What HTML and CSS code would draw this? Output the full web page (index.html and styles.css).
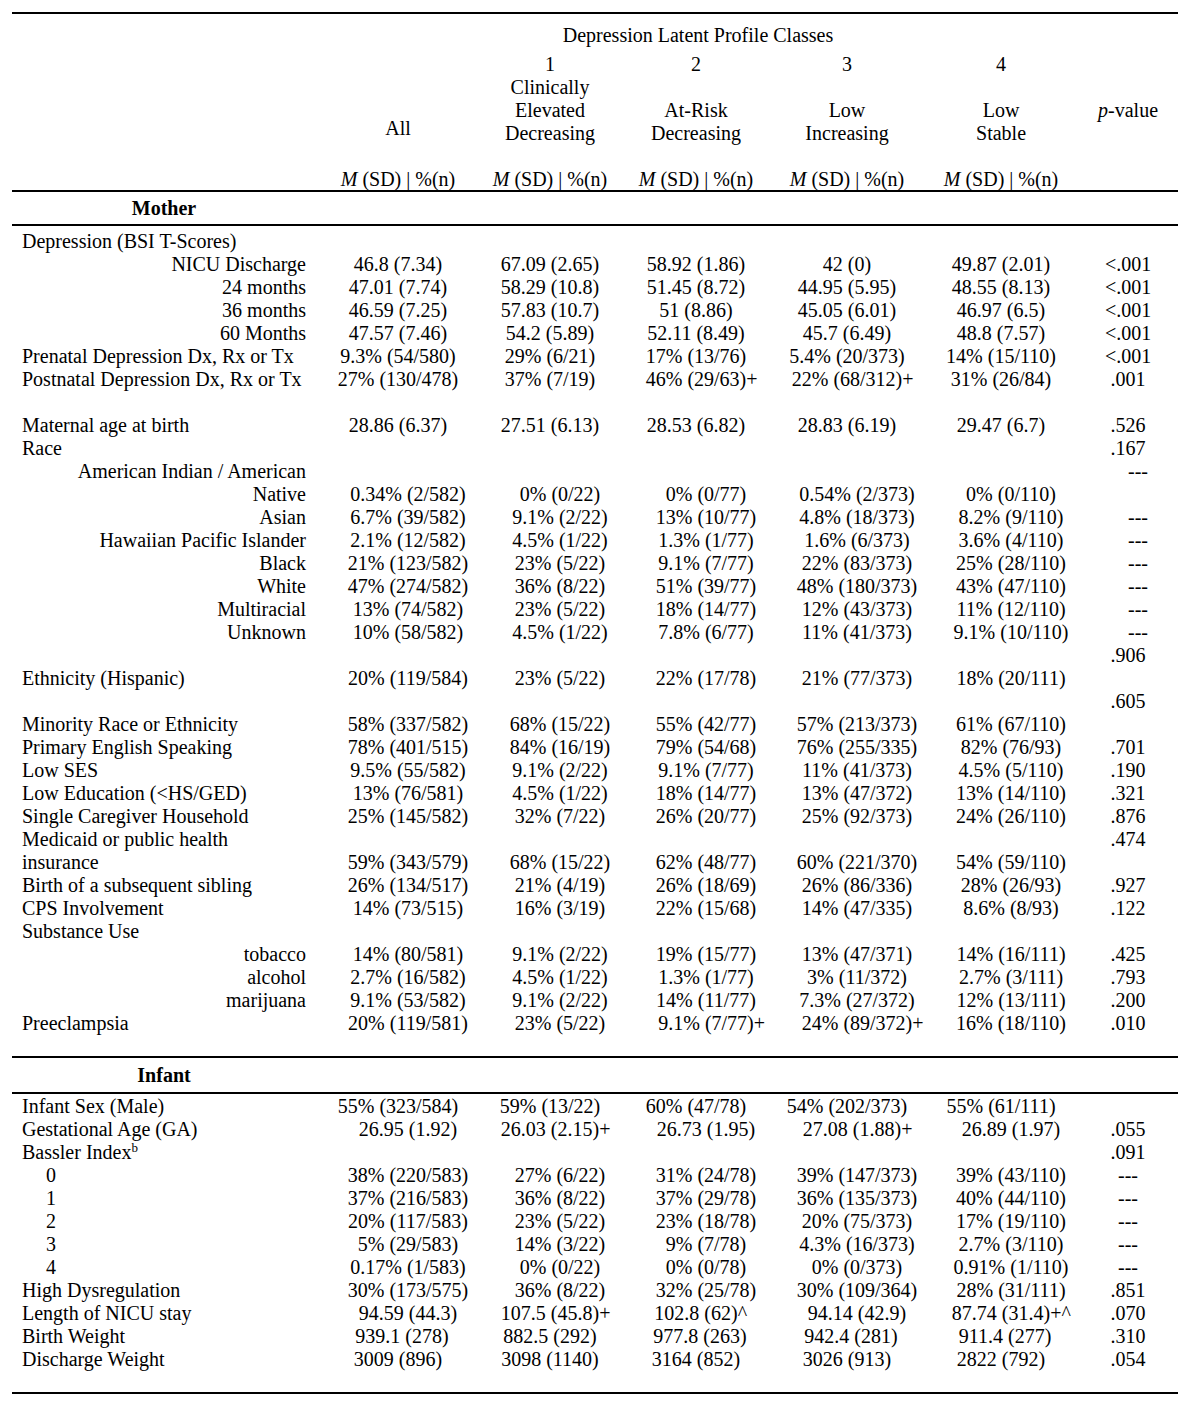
FILE: index.html
```html
<!DOCTYPE html>
<html lang="en">
<head>
<meta charset="utf-8">
<title>Depression Latent Profile Classes</title>
<link rel="stylesheet" href="styles.css">
</head>
<body>
<div class="page">
<table class="t">
<colgroup><col class="c0"><col class="c1"><col class="c2"><col class="c3"><col class="c4"><col class="c5"><col class="c6"></colgroup>
<thead>
<tr class="ttl"><td></td><td colspan="5" class="ctr">Depression Latent Profile Classes</td><td></td></tr>
<tr><td></td><td rowspan="4" class="all">All</td><td class="ctr">1</td><td class="ctr">2</td><td class="ctr">3</td><td class="ctr">4</td><td></td></tr>
<tr><td></td><td class="ctr">Clinically</td><td></td><td></td><td></td><td></td></tr>
<tr><td></td><td class="ctr">Elevated</td><td class="ctr">At-Risk</td><td class="ctr">Low</td><td class="ctr">Low</td><td class="pv"><i>p</i>-value</td></tr>
<tr><td></td><td class="ctr">Decreasing</td><td class="ctr">Decreasing</td><td class="ctr">Increasing</td><td class="ctr">Stable</td><td></td></tr>
<tr><td>&nbsp;</td><td></td><td></td><td></td><td></td><td></td><td></td></tr>
<tr class="msd"><td></td><td class="ctr"><i>M</i> (SD) | %(n)</td><td class="ctr"><i>M</i> (SD) | %(n)</td><td class="ctr"><i>M</i> (SD) | %(n)</td><td class="ctr"><i>M</i> (SD) | %(n)</td><td class="ctr"><i>M</i> (SD) | %(n)</td><td></td></tr>
</thead>
<tbody class="b">
<tr class="sec"><td class="sh">Mother</td><td></td><td></td><td></td><td></td><td></td><td></td></tr>
<tr class="first"><td>Depression (BSI T-Scores)</td><td></td><td></td><td></td><td></td><td></td><td></td></tr>
<tr><td class="r">NICU Discharge</td><td>46.8 (7.34)</td><td>67.09 (2.65)</td><td>58.92 (1.86)</td><td>42 (0)</td><td>49.87 (2.01)</td><td>&lt;.001</td></tr>
<tr><td class="r">24 months</td><td>47.01 (7.74)</td><td>58.29 (10.8)</td><td>51.45 (8.72)</td><td>44.95 (5.95)</td><td>48.55 (8.13)</td><td>&lt;.001</td></tr>
<tr><td class="r">36 months</td><td>46.59 (7.25)</td><td>57.83 (10.7)</td><td>51 (8.86)</td><td>45.05 (6.01)</td><td>46.97 (6.5)</td><td>&lt;.001</td></tr>
<tr><td class="r">60 Months</td><td>47.57 (7.46)</td><td>54.2 (5.89)</td><td>52.11 (8.49)</td><td>45.7 (6.49)</td><td>48.8 (7.57)</td><td>&lt;.001</td></tr>
<tr><td>Prenatal Depression Dx, Rx or Tx</td><td>9.3% (54/580)</td><td>29% (6/21)</td><td>17% (13/76)</td><td>5.4% (20/373)</td><td>14% (15/110)</td><td>&lt;.001</td></tr>
<tr><td>Postnatal Depression Dx, Rx or Tx</td><td>27% (130/478)</td><td>37% (7/19)</td><td>46% (29/63)<span class="x">+</span></td><td>22% (68/312)<span class="x">+</span></td><td>31% (26/84)</td><td>.001</td></tr>
<tr><td>&nbsp;</td><td></td><td></td><td></td><td></td><td></td><td></td></tr>
<tr><td>Maternal age at birth</td><td>28.86 (6.37)</td><td>27.51 (6.13)</td><td>28.53 (6.82)</td><td>28.83 (6.19)</td><td>29.47 (6.7)</td><td>.526</td></tr>
<tr><td>Race</td><td></td><td></td><td></td><td></td><td></td><td>.167</td></tr>
<tr><td class="r">American Indian / American</td><td></td><td></td><td></td><td></td><td></td><td class="ps">---</td></tr>
<tr class="s"><td class="r">Native</td><td>0.34% (2/582)</td><td>0% (0/22)</td><td>0% (0/77)</td><td>0.54% (2/373)</td><td>0% (0/110)</td><td></td></tr>
<tr class="s"><td class="r">Asian</td><td>6.7% (39/582)</td><td>9.1% (2/22)</td><td>13% (10/77)</td><td>4.8% (18/373)</td><td>8.2% (9/110)</td><td class="ps">---</td></tr>
<tr class="s"><td class="r">Hawaiian Pacific Islander</td><td>2.1% (12/582)</td><td>4.5% (1/22)</td><td>1.3% (1/77)</td><td>1.6% (6/373)</td><td>3.6% (4/110)</td><td class="ps">---</td></tr>
<tr class="s"><td class="r">Black</td><td>21% (123/582)</td><td>23% (5/22)</td><td>9.1% (7/77)</td><td>22% (83/373)</td><td>25% (28/110)</td><td class="ps">---</td></tr>
<tr class="s"><td class="r">White</td><td>47% (274/582)</td><td>36% (8/22)</td><td>51% (39/77)</td><td>48% (180/373)</td><td>43% (47/110)</td><td class="ps">---</td></tr>
<tr class="s"><td class="r">Multiracial</td><td>13% (74/582)</td><td>23% (5/22)</td><td>18% (14/77)</td><td>12% (43/373)</td><td>11% (12/110)</td><td class="ps">---</td></tr>
<tr class="s"><td class="r">Unknown</td><td>10% (58/582)</td><td>4.5% (1/22)</td><td>7.8% (6/77)</td><td>11% (41/373)</td><td>9.1% (10/110)</td><td class="ps">---</td></tr>
<tr><td>&nbsp;</td><td></td><td></td><td></td><td></td><td></td><td>.906</td></tr>
<tr class="s"><td>Ethnicity (Hispanic)</td><td>20% (119/584)</td><td>23% (5/22)</td><td>22% (17/78)</td><td>21% (77/373)</td><td>18% (20/111)</td><td></td></tr>
<tr><td>&nbsp;</td><td></td><td></td><td></td><td></td><td></td><td>.605</td></tr>
<tr class="s"><td>Minority Race or Ethnicity</td><td>58% (337/582)</td><td>68% (15/22)</td><td>55% (42/77)</td><td>57% (213/373)</td><td>61% (67/110)</td><td></td></tr>
<tr class="s"><td>Primary English Speaking</td><td>78% (401/515)</td><td>84% (16/19)</td><td>79% (54/68)</td><td>76% (255/335)</td><td>82% (76/93)</td><td>.701</td></tr>
<tr class="s"><td>Low SES</td><td>9.5% (55/582)</td><td>9.1% (2/22)</td><td>9.1% (7/77)</td><td>11% (41/373)</td><td>4.5% (5/110)</td><td>.190</td></tr>
<tr class="s"><td>Low Education (&lt;HS/GED)</td><td>13% (76/581)</td><td>4.5% (1/22)</td><td>18% (14/77)</td><td>13% (47/372)</td><td>13% (14/110)</td><td>.321</td></tr>
<tr class="s"><td>Single Caregiver Household</td><td>25% (145/582)</td><td>32% (7/22)</td><td>26% (20/77)</td><td>25% (92/373)</td><td>24% (26/110)</td><td>.876</td></tr>
<tr><td>Medicaid or public health</td><td></td><td></td><td></td><td></td><td></td><td>.474</td></tr>
<tr class="s"><td>insurance</td><td>59% (343/579)</td><td>68% (15/22)</td><td>62% (48/77)</td><td>60% (221/370)</td><td>54% (59/110)</td><td></td></tr>
<tr class="s"><td>Birth of a subsequent sibling</td><td>26% (134/517)</td><td>21% (4/19)</td><td>26% (18/69)</td><td>26% (86/336)</td><td>28% (26/93)</td><td>.927</td></tr>
<tr class="s"><td>CPS Involvement</td><td>14% (73/515)</td><td>16% (3/19)</td><td>22% (15/68)</td><td>14% (47/335)</td><td>8.6% (8/93)</td><td>.122</td></tr>
<tr><td>Substance Use</td><td></td><td></td><td></td><td></td><td></td><td></td></tr>
<tr class="s"><td class="r">tobacco</td><td>14% (80/581)</td><td>9.1% (2/22)</td><td>19% (15/77)</td><td>13% (47/371)</td><td>14% (16/111)</td><td>.425</td></tr>
<tr class="s"><td class="r">alcohol</td><td>2.7% (16/582)</td><td>4.5% (1/22)</td><td>1.3% (1/77)</td><td>3% (11/372)</td><td>2.7% (3/111)</td><td>.793</td></tr>
<tr class="s"><td class="r">marijuana</td><td>9.1% (53/582)</td><td>9.1% (2/22)</td><td>14% (11/77)</td><td>7.3% (27/372)</td><td>12% (13/111)</td><td>.200</td></tr>
<tr class="s"><td>Preeclampsia</td><td>20% (119/581)</td><td>23% (5/22)</td><td>9.1% (7/77)<span class="x">+</span></td><td>24% (89/372)<span class="x">+</span></td><td>16% (18/110)</td><td>.010</td></tr>
<tr class="gap"><td>&nbsp;</td><td></td><td></td><td></td><td></td><td></td><td></td></tr>
</tbody>
<tbody class="b">
<tr class="sec sec2"><td class="sh">Infant</td><td></td><td></td><td></td><td></td><td></td><td></td></tr>
<tr class="first2"><td>Infant Sex (Male)</td><td>55% (323/584)</td><td>59% (13/22)</td><td>60% (47/78)</td><td>54% (202/373)</td><td>55% (61/111)</td><td></td></tr>
<tr><td>Gestational Age (GA)</td><td class="s">26.95 (1.92)</td><td>26.03 (2.15)<span class="x">+</span></td><td class="s">26.73 (1.95)</td><td class="s3">27.08 (1.88)<span class="x">+</span></td><td class="s">26.89 (1.97)</td><td>.055</td></tr>
<tr><td>Bassler Index<sup class="sp">b</sup></td><td></td><td></td><td></td><td></td><td></td><td>.091</td></tr>
<tr class="s"><td class="i">0</td><td>38% (220/583)</td><td>27% (6/22)</td><td>31% (24/78)</td><td>39% (147/373)</td><td>39% (43/110)</td><td>---</td></tr>
<tr class="s"><td class="i">1</td><td>37% (216/583)</td><td>36% (8/22)</td><td>37% (29/78)</td><td>36% (135/373)</td><td>40% (44/110)</td><td>---</td></tr>
<tr class="s"><td class="i">2</td><td>20% (117/583)</td><td>23% (5/22)</td><td>23% (18/78)</td><td>20% (75/373)</td><td>17% (19/110)</td><td>---</td></tr>
<tr class="s"><td class="i">3</td><td>5% (29/583)</td><td>14% (3/22)</td><td>9% (7/78)</td><td>4.3% (16/373)</td><td>2.7% (3/110)</td><td>---</td></tr>
<tr class="s"><td class="i">4</td><td>0.17% (1/583)</td><td>0% (0/22)</td><td>0% (0/78)</td><td>0% (0/373)</td><td>0.91% (1/110)</td><td>---</td></tr>
<tr class="s"><td>High Dysregulation</td><td>30% (173/575)</td><td>36% (8/22)</td><td>32% (25/78)</td><td>30% (109/364)</td><td>28% (31/111)</td><td>.851</td></tr>
<tr><td>Length of NICU stay</td><td class="s">94.59 (44.3)</td><td>107.5 (45.8)<span class="x">+</span></td><td>102.8 (62)<span class="x">^</span></td><td class="s">94.14 (42.9)</td><td>87.74 (31.4)<span class="x">+^</span></td><td>.070</td></tr>
<tr><td>Birth Weight</td><td class="h">939.1 (278)</td><td>882.5 (292)</td><td class="h">977.8 (263)</td><td class="h">942.4 (281)</td><td class="h">911.4 (277)</td><td>.310</td></tr>
<tr><td>Discharge Weight</td><td>3009 (896)</td><td>3098 (1140)</td><td>3164 (852)</td><td>3026 (913)</td><td>2822 (792)</td><td>.054</td></tr>
<tr class="gap"><td>&nbsp;</td><td></td><td></td><td></td><td></td><td></td><td></td></tr>
</tbody>
</table>
</div>
</body>
</html>
```

FILE: styles.css
```css
html, body {
  margin: 0;
  padding: 0;
  background: #fff;
}

body {
  font-family: "Liberation Serif", "Times New Roman", serif;
  font-size: 20px;
  line-height: 23px;
  color: #000;
}

.page {
  padding: 12px 0 0 12px;
}

.t {
  border-collapse: separate;
  border-spacing: 0;
  table-layout: fixed;
  width: 1166px;
  border-top: 2px solid #000;
  border-bottom: 2px solid #000;
}

.c0 { width: 312px; }
.c1 { width: 148px; }
.c2 { width: 156px; }
.c3 { width: 136px; }
.c4 { width: 166px; }
.c5 { width: 142px; }
.c6 { width: 106px; }

.t td {
  padding: 0;
  white-space: nowrap;
  vertical-align: top;
}

/* header */
.ctr { text-align: center; }

.ttl td {
  padding-top: 10px;
  padding-bottom: 6px;
}

.t td.all {
  text-align: center;
  padding-top: 64px;
}

.t td.pv {
  text-align: center;
  padding-left: 6px;
}

.msd td {
  line-height: 22px;
  border-bottom: 2px solid #000;
}

/* body */
.b td {
  text-align: center;
}

.b td:first-child {
  text-align: left;
  padding-left: 10px;
}

.b td:last-child {
  padding-left: 6px;
}

.b td.r {
  text-align: right;
  padding-left: 0;
  padding-right: 18px;
}

.b td.i {
  padding-left: 34px;
}

.b td.sh {
  text-align: center;
  padding-left: 0;
  padding-right: 8px;
  font-weight: bold;
}

.b tr.sec td {
  padding-top: 5px;
  padding-bottom: 4px;
  border-bottom: 2px solid #000;
}

.b tr.sec2 td {
  padding-top: 6px;
  padding-bottom: 5px;
  border-top: 2px solid #000;
}

.b tr.first td {
  padding-top: 4px;
}

.b tr.first2 td {
  padding-top: 1px;
}

.b tr.gap td {
  line-height: 21px;
}

/* Word-style offsets of some centred values */
.b tr.s td:nth-child(n+2):nth-child(-n+6),
.b td.s {
  padding-left: 20px;
}

.b tr.s td:nth-child(5),
.b td.s3 {
  padding-left: 10px;
}

.b td.h {
  padding-left: 8px;
}

.b td.ps {
  padding-left: 26px;
}

/* suffix marks that do not count in centring */
.x {
  display: inline-block;
  width: 0;
  text-align: left;
}

.sp {
  font-size: 13px;
  line-height: 0;
  vertical-align: 7px;
}
```
